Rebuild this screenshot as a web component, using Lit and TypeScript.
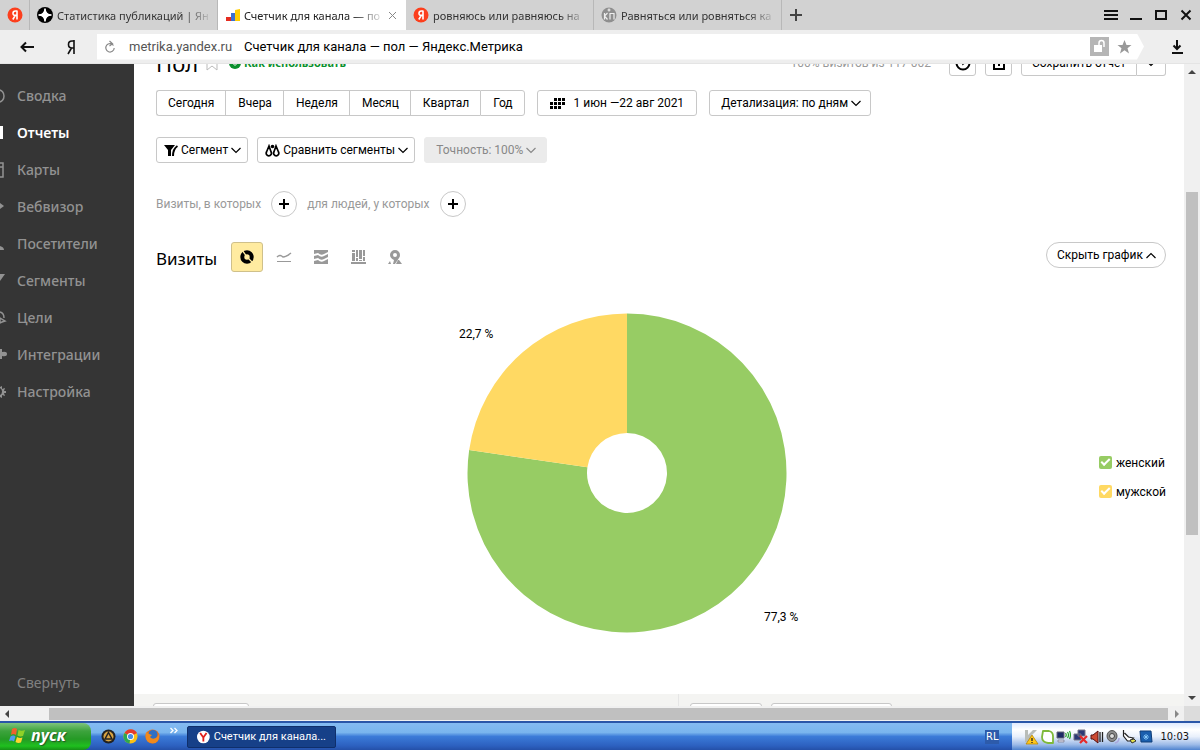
import { LitElement, html, svg, css, nothing } from "lit";
import { customElement, state } from "lit/decorators.js";

const yandexBadge = html`<svg width="16" height="16" viewBox="0 0 16 16" aria-hidden="true">
  <circle cx="8" cy="8" r="7.5" fill="#fc3f1d" />
  <path d="M10 3.5V12.5M10 4H8.4Q6 4 6 6.3T8.4 8.4H10M8.3 8.4L5.8 12.5" fill="none" stroke="#fff" stroke-width="1.6" />
</svg>`;

const zenIcon = html`<svg width="16" height="16" viewBox="0 0 16 16" aria-hidden="true">
  <circle cx="8" cy="8" r="8" fill="#000" />
  <path d="M8 1.500Q8 8 14.500 8Q8 8 8 14.500Q8 8 1.500 8Q8 8 8 1.500Z" fill="#fff" stroke="#fff" stroke-width="1.500" />
  <path d="M8 4l1.500 2.500L12 8 9.500 9.500 8 12 6.500 9.500 4 8l2.500-1.500z" fill="#fff" />
</svg>`;

const metrikaIcon = html`<svg width="16" height="16" viewBox="0 0 16 16" aria-hidden="true">
  <path d="M1 10h5v4H1z" fill="#e52c20" />
  <path d="M6 6h4v8H6z" fill="#3a6fd0" />
  <path d="M10 3l5-1v12h-5z" fill="#ffcd00" />
</svg>`;

const kpIcon = html`<svg width="16" height="16" viewBox="0 0 16 16" aria-hidden="true">
  <circle cx="8" cy="8" r="7.5" fill="#8f8f8f" />
  <path d="M3.5 6v6.500M6.500 6l-3 3 3 3.500M9 12.500v-6h4v6M8 1.500v3M6.500 3h3" fill="none" stroke="#eee" stroke-width="1.200" />
</svg>`;

const chevron = (up = false) => html`<svg width="10" height="7" viewBox="0 0 10 7" aria-hidden="true">
  <path d=${up ? "M.5 6L5 1.500L9.500 6" : "M.5 1L5 5.500L9.500 1"} fill="none" stroke="currentColor" stroke-width="1.200" />
</svg>`;

const plus = html`<svg width="12" height="12" viewBox="0 0 12 12" aria-hidden="true">
  <path d="M6 1v10M1 6h10" stroke="#000" stroke-width="2" />
</svg>`;

interface Tab {
  title: string;
  icon: unknown;
  active?: boolean;
}

const TABS: Tab[] = [
  { title: "Статистика публикаций | Ян", icon: zenIcon },
  { title: "Счетчик для канала — по", icon: metrikaIcon, active: true },
  { title: "ровняюсь или равняюсь на", icon: yandexBadge },
  { title: "Равняться или ровняться ка", icon: kpIcon },
];

const MENU = [
  { name: "Сводка", icon: svg`<ellipse cx="-1" cy="8" rx="5" ry="6" fill="none" stroke="currentColor" stroke-width="1.500"/>` },
  { name: "Отчеты", icon: svg`<path d="M0 1h3v13H0z" fill="currentColor"/>` },
  { name: "Карты", icon: svg`<path d="M0 1h3v14H0M0 5h3" fill="none" stroke="currentColor" stroke-width="1.500"/>` },
  { name: "Вебвизор", icon: svg`<path d="M0 4l4 3-4 3z" fill="currentColor"/>` },
  { name: "Посетители", icon: svg`<path d="M0 10q4 1 4 4H0z" fill="currentColor"/>` },
  { name: "Сегменты", icon: svg`<path d="M0 1h5L0 8z" fill="currentColor"/>` },
  { name: "Цели", icon: svg`<path d="M0 2q4 1 4 6M0 13V8l5 3-3 1z" fill="none" stroke="currentColor" stroke-width="1.500"/>` },
  { name: "Интеграции", icon: svg`<path d="M0 2h2v3q5-1 5 2t-5 2v3H0z" fill="currentColor"/>` },
  { name: "Настройка", icon: svg`<path d="M0 3l2-1v3l3-1-1 3h2v2H4l1 3-3-1v3l-2-1v-2a4 4 0 0 0 0-7z" fill="currentColor"/>` },
];

const PERIODS = ["Сегодня", "Вчера", "Неделя", "Месяц", "Квартал", "Год"];

const VIEWS = [
  { name: "Круговая диаграмма", icon: svg`<circle cx="8" cy="8" r="4.700" fill="none" stroke="#000" stroke-width="4"/><path d="M8 8L3 1M8 8L14 14" stroke="#ffeba0" stroke-width="1.300"/>` },
  { name: "Линии", icon: svg`<path d="M1 8q3-3 6 0Q10 8 15 4" fill="none" stroke="#999" stroke-width="1.500"/><path d="M1 12.500h14" stroke="#999" stroke-width="1"/>` },
  { name: "Области", icon: svg`<path d="M1 1h14v2L11 5Q8 7 5 4L1 5zM1 7l4-1q3 3 6 1l4-2v3l-4 2Q8 12 5 9L1 10zM1 12l4-1q3 3 6 1l4-2v5H1z" fill="#999"/>` },
  { name: "Колонки", icon: svg`<path d="M2 1h3v2H2zM2 4h3v8H2zM6 1h2v7H6zM6 9h2v3H6zM9 1h3v9H9zM9 11h3v1H9zM13 1h2v6h-2zM13 8h2v4h-2zM1 13h15v2H1z" fill="#999"/>` },
  { name: "Карта", icon: svg`<path d="M8 1a5 5 0 0 0-5 5q0 3 4 5l-1 4h2l4-6q1-1 1-3a5 5 0 0 0-5-5zm0 3a2 2 0 1 1 0 4 2 2 0 0 1 0-4zM3 12L1 15h3zM11 11l-2 4h6l-3-4z" fill="#999" fill-rule="evenodd"/>` },
];

const SHARES = [
  { name: "женский", value: 77.3, color: "#97cc64", tx: 297, ty: 308 },
  { name: "мужской", value: 22.7, color: "#ffd963", tx: -8, ty: 25 },
];

@customElement("browser-chrome")
class BrowserChrome extends LitElement {
  static styles = css`
    :host { display: block; font-family: "Noto Sans", "Open Sans", sans-serif; }
    button { border: 0; background: none; padding: 0; color: inherit; font: inherit; display: grid; place-items: center; }
    .tabs { display: flex; height: 30px; background: #d2d2d2; align-items: stretch; }
    .pinned { width: 30px; border-right: 1px solid #b8b8b8; box-sizing: border-box; flex: none; }
    .tab { flex: 0 1 188px; min-width: 0; box-sizing: border-box; display: flex; align-items: center; gap: 4px; padding: 0 4px 0 7px; border-right: 1px solid #b8b8b8; font-size: 11px; color: #333; text-align: left; }
    .tab svg { flex: none; }
    .tab .name { flex: 1; min-width: 0; overflow: hidden; white-space: nowrap; mask-image: linear-gradient(to right, #000 calc(100% - 30px), transparent); }
    .active { background: #fff; border-color: #fff; color: #222; gap: 3px; padding-right: 8px; }
    .plus { width: 28px; }
    .window { margin-left: auto; display: flex; align-items: center; gap: 8px; padding-right: 6px; }
    .window button { width: 17px; height: 20px; }
    .bar { display: flex; height: 34px; background: #eee; align-items: center; box-sizing: border-box; padding: 4px 14px 4px 18px; border-bottom: 1px solid #e4e4e4; }
    .nav { width: 17px; height: 26px; }
    .ya { margin-left: 27px; margin-right: 18px; }
    .address { flex: 1; margin-right: 24px; min-width: 0; height: 26px; display: flex; align-items: center; background: #fff; padding: 0 10px 0 6px; clip-path: polygon(0 0, calc(100% - 7px) 0, 100% 50%, calc(100% - 7px) 100%, 0 100%); font: 13px/18px Roboto, "Noto Sans", sans-serif; }
    .address input { margin-left: 12px; border: 0; padding: 0; width: 115px; background: none; font: inherit; color: #555; outline: 0; }
    .address label { flex: 1; min-width: 0; white-space: nowrap; overflow: hidden; color: #000; }
    .address .end { margin-left: 6px; }
  `;

  render() {
    return html`
      <nav class="tabs" aria-label="Вкладки">
        <button class="pinned" aria-label="Яндекс">${yandexBadge}</button>
        ${TABS.map(
          (t) => html`<button class="tab ${t.active ? "active" : ""}">
            ${t.icon}<span class="name">${t.title}</span>
            ${t.active
              ? html`<svg width="9" height="9" viewBox="0 0 9 9"><path d="M1 1l7 7M8 1L1 8" stroke="#888" /></svg>`
              : nothing}
          </button>`
        )}
        <button class="plus" aria-label="Новая вкладка">
          <svg width="12" height="12"><path d="M6 0v12M0 6h12" stroke="#444" stroke-width="2" /></svg>
        </button>
        <div class="window">
          <button aria-label="Меню"><svg width="14" height="12"><path d="M0 2h14M0 6h14M0 10h14" stroke="#111" stroke-width="2" /></svg></button>
          <button aria-label="Свернуть"><svg width="12" height="12"><path d="M0 10h12" stroke="#111" stroke-width="2" /></svg></button>
          <button aria-label="Развернуть"><svg width="12" height="12"><path d="M1 2h10v8H1z" fill="none" stroke="#111" stroke-width="2" /></svg></button>
          <button aria-label="Закрыть"><svg width="12" height="12"><path d="M1.500 1.500l9 9M10.500 1.500l-9 9" stroke="#111" stroke-width="2" /></svg></button>
        </div>
      </nav>
      <div class="bar">
        <button class="nav" aria-label="Назад">
          <svg width="14" height="12"><path d="M14 6H2M6 1.500L1.500 6L6 10.500" fill="none" stroke="#111" stroke-width="2" /></svg>
        </button>
        <button class="nav ya" aria-label="Яндекс">
          <svg width="10" height="16" viewBox="0 0 10 16"><path d="M8 1v14M8 2H6Q2.500 2 2.500 5.500T6 9H8M5.500 9L2 15" fill="none" stroke="#111" stroke-width="1.600" /></svg>
        </button>
        <div class="address">
          <button aria-label="Обновить">
            <svg width="14" height="14" viewBox="0 0 14 14"><path d="M10.500 5.500A4.200 4.200 0 1 0 11.200 8M6.500 1L9.500 3.800L6.500 6" fill="none" stroke="#888" stroke-width="1.200" /></svg>
          </button>
          <input id="url" value="metrika.yandex.ru" />
          <label for="url">Счетчик для канала — пол — Яндекс.Метрика</label>
          <button class="end" aria-label="Защита">
            <svg width="19" height="19"><path d="M0 0h19v19H0z" fill="#b5b5b5" /><path d="M4 8h8v7H4z" fill="#fff" /><path d="M9 8V6a2.500 2.500 0 0 1 5 0v4" fill="none" stroke="#fff" stroke-width="1.500" /></svg>
          </button>
          <button class="end" aria-label="Закладка">
            <svg width="19" height="16" viewBox="0 0 19 16"><path d="M9.500 1l2 5h5l-4 3.200 1.500 5.300-4.500-3.300L5 14.500l1.500-5.300-4-3.200h5z" fill="#999" /></svg>
          </button>
        </div>
        <button class="end" aria-label="Загрузки">
          <svg width="18" height="14" viewBox="0 0 18 14"><path d="M9 0v9M5.500 5.500L9 9l3.500-3.500M4 13h11" fill="none" stroke="#111" stroke-width="2" /></svg>
        </button>
      </div>
    `;
  }
}

@customElement("side-menu")
class SideMenu extends LitElement {
  static styles = css`
    :host { display: flex; flex-direction: column; justify-content: space-between; background: #353535; font: 500 14px/37px "Noto Sans", "Open Sans", sans-serif; padding-top: 13px; box-sizing: border-box; overflow: hidden; }
    a { display: flex; align-items: center; gap: 9px; height: 37px; color: #929292; text-decoration: none; }
    a.on { color: #fff; font-weight: 600; }
    .fold { border: 0; background: none; text-align: left; padding: 0 0 0 17px; margin-bottom: 5px; color: #808080; font: 14px/36px "Noto Sans", "Open Sans", sans-serif; }
  `;

  render() {
    return html`
      <nav>
        ${MENU.map(
          (m) => html`<a href="#" class=${m.name === "Отчеты" ? "on" : ""}>
            <svg width="8" height="20" viewBox="0 0 8 16" aria-hidden="true">${m.icon}</svg>${m.name}
          </a>`
        )}
      </nav>
      <button class="fold">Свернуть</button>
    `;
  }
}

@customElement("report-page")
class ReportPage extends LitElement {
  @state() private period = "";
  @state() private view = 0;

  static styles = css`
    :host { display: flex; flex-direction: column; background: #fff; overflow: hidden; min-width: 0; font: 12px/16px Roboto, "Liberation Sans", sans-serif; color: #000; }
    button { height: 26px; box-sizing: border-box; border: 1px solid #c8c8c8; border-radius: 3px; background: #fff; color: #000; padding: 0 11px; font: inherit; display: inline-flex; align-items: center; justify-content: center; gap: 4px; white-space: nowrap; }
    .body { padding: 0 18px 0 22px; display: flex; flex-direction: column; flex: 1; }
    .row { display: flex; align-items: center; }
    .head { margin-top: -14px; height: 26px; }
    h1 { margin: 0; font: 22px/26px "Noto Sans", sans-serif; }
    .star { margin: 0 11px 0 8px; }
    .how { display: flex; align-items: center; gap: 3px; color: #0a8f2c; font: 700 11px/16px "Noto Sans", sans-serif; text-decoration: none; }
    .count { margin-left: auto; margin-right: 18px; color: #999; }
    .square { width: 27px; padding: 0; margin-right: 9px; }
    .left { border-radius: 3px 0 0 3px; padding: 0 10px; }
    .right { border-radius: 0 3px 3px 0; border-left: 0; padding: 0 9px; }
    .periods { margin-top: 14px; gap: 12px; }
    .group { display: flex; }
    .group button { border-right-width: 0; border-radius: 0; padding-left: 12px; }
    .group button:first-child { border-radius: 3px 0 0 3px; padding-left: 11px; }
    .group button:last-child { border-radius: 0 3px 3px 0; border-right-width: 1px; }
    .group .chosen { background: #ffeba0; }
    .date { gap: 9px; padding: 0 12px; }
    .detail { padding: 0 9px 0 11px; gap: 3px; }
    .segments { margin-top: 21px; gap: 9px; }
    .segments button { padding: 0 6px 0 7px; gap: 3px; }
    .segments .off { background: #ebebeb; border-color: #ebebeb; color: #888; padding: 0 10px 0 11px; }
    .filters { margin-top: 28px; gap: 10px; color: #999; }
    .round { width: 26px; padding: 0; border-radius: 13px; }
    .chart-head { margin-top: 25px; height: 30px; }
    h2 { margin: 0 14px 0 0; padding-top: 4px; font: 17px/30px "Noto Sans", "Open Sans", sans-serif; }
    .views { display: flex; gap: 5px; }
    .views button { width: 32px; height: 30px; padding: 0; border-color: transparent; background: none; }
    .views .current { background: #ffeba0; border-color: #cfc08a; }
    .hide { margin-left: auto; align-self: flex-start; border-radius: 13px; padding: 0 9px 0 10px; gap: 3px; }
    .chart { display: grid; grid-template-columns: 1fr auto; align-items: center; margin-top: 41px; }
    .pie { justify-self: center; overflow: visible; display: block; }
    .pie text { font: 12px Roboto, sans-serif; }
    .legend { display: flex; flex-direction: column; gap: 13px; padding-top: 8px; }
    .legend label { display: flex; align-items: center; gap: 4px; }
    .legend input { appearance: none; margin: 0; width: 13px; height: 13px; border-radius: 2px; display: grid; place-items: center; }
    .legend input::before { content: ""; width: 7px; height: 3px; border: solid #fff; border-width: 0 0 2px 2px; transform: rotate(-45deg) translate(1px, -1px); }
    .next { height: 12px; flex: none; background: #f4f4f2; display: grid; grid-template-columns: 544px 1fr; }
    .next .cell { padding: 9px 19px 0; display: flex; gap: 9px; overflow: hidden; }
    .next .cell + .cell { border-left: 1px solid #e6e6e6; padding-left: 11px; }
    .next .w1 { width: 96px; }
    .next .w2 { width: 72px; }
    .next .w3 { width: 121px; }
  `;

  private slice(from: number, to: number, color: string) {
    const at = (v: number, r: number) => {
      const a = (v / 100) * Math.PI * 2;
      return `${160 + r * Math.sin(a)} ${160 - r * Math.cos(a)}`;
    };
    const big = to - from > 50 ? 1 : 0;
    return svg`<path fill=${color} d="M${at(from, 159.5)}A159.5 159.5 0 ${big} 1 ${at(to, 159.5)}L${at(to, 40)}A40 40 0 ${big} 0 ${at(from, 40)}Z"/>`;
  }

  render() {
    let sum = 0;
    return html`
      <div class="body">
        <div class="row head">
          <h1>Пол</h1>
          <svg class="star" width="12" height="16"><path d="M1 1h10v14l-5-4-5 4z" fill="none" stroke="#bbb" /></svg>
          <a class="how" href="#"><svg width="12" height="12"><circle cx="6" cy="6" r="6" fill="#0a8f2c" /><path d="M3.500 6l2.500 2.500L8.500 6" stroke="#fff" fill="none" /></svg>Как использовать</a>
          <span class="count">100% визитов из 117 002</span>
          <button class="square" aria-label="История"><svg width="16" height="16"><circle cx="8" cy="8" r="6.500" fill="none" stroke="#000" stroke-width="2" /><path d="M8 4v5l3-2" fill="none" stroke="#000" stroke-width="1.500" /></svg></button>
          <button class="square" aria-label="Экспорт"><svg width="14" height="16"><path d="M4 6H2v8h10V6h-2M7 11V2" fill="none" stroke="#000" stroke-width="2" /></svg></button>
          <button class="left">Сохранить отчет</button><button class="right" aria-label="Еще">${chevron()}</button>
        </div>

        <div class="row periods">
          <div class="group">
            ${PERIODS.map((p) => html`<button class=${p === this.period ? "chosen" : ""} @click=${() => (this.period = p)}>${p}</button>`)}
          </div>
          <button class="date">
            <svg width="15" height="11"><path d="M4 1.500h11M0 5.500h15M0 9.500h11" stroke="#000" stroke-width="3" stroke-dasharray="3 1" /></svg>1 июн —22 авг 2021
          </button>
          <button class="detail">Детализация: по дням ${chevron()}</button>
        </div>

        <div class="row segments">
          <button>
            <svg width="14" height="13"><path d="M0 1h11L7 6v6H4V6z" /><path d="M13.500 2Q9 5 9 12" fill="none" stroke="#000" stroke-width="2" /></svg>Сегмент ${chevron()}
          </button>
          <button>
            <svg width="15" height="13" viewBox="0 0 15 13"><path d="M4 2L1.500 8a2.600 2.600 0 1 0 4.600 0zM11 2L8.900 8a2.600 2.600 0 1 0 4.600 0z" fill="none" stroke="#000" stroke-width="1.700" /><circle cx="7.500" cy="2.500" r="1.800" /></svg>Сравнить сегменты ${chevron()}
          </button>
          <button class="off" disabled>Точность: 100% ${chevron()}</button>
        </div>

        <div class="row filters">
          <span>Визиты, в которых</span>
          <button class="round" aria-label="Добавить условие визитов">${plus}</button>
          <span>для людей, у которых</span>
          <button class="round" aria-label="Добавить условие людей">${plus}</button>
        </div>

        <div class="row chart-head">
          <h2>Визиты</h2>
          <div class="views">
            ${VIEWS.map(
              (v, i) => html`<button aria-label=${v.name} class=${i === this.view ? "current" : ""} @click=${() => (this.view = i)}>
                <svg width="16" height="16" viewBox="0 0 16 16">${v.icon}</svg>
              </button>`
            )}
          </div>
          <button class="hide">Скрыть график ${chevron(true)}</button>
        </div>

        <div class="chart">
          <svg class="pie" width="320" height="320" viewBox="0 0 320 320" role="img" aria-label="Визиты по полу">
            ${SHARES.map((s) => {
              const from = sum;
              sum += s.value;
              return this.slice(from, sum, s.color);
            })}
            ${SHARES.map((s) => svg`<text x=${s.tx} y=${s.ty}>${s.value.toFixed(1).replace(".", ",")} %</text>`)}
          </svg>
          <div class="legend">
            ${SHARES.map((s) => html`<label><input type="checkbox" checked style="background:${s.color}" />${s.name}</label>`)}
          </div>
        </div>
      </div>
      <div class="next">
        <div class="cell"><button class="w1" aria-label="Цель"></button></div>
        <div class="cell"><button class="w2" aria-label="Группировка"></button><button class="w3" aria-label="Метрики"></button></div>
      </div>
    `;
  }
}

@customElement("task-bar")
class TaskBar extends LitElement {
  static styles = css`
    :host { display: flex; height: 29px; align-items: stretch; box-sizing: border-box; border-top: 2px solid #2a56a8; background: linear-gradient(#84bbf2 0, #79b5ee 35%, #3b7bd8 50%, #2c60bf 85%, #2450a8 100%); font: 11px/14px "DejaVu Sans Condensed", "Noto Sans", sans-serif; }
    button { border: 0; padding: 0; background: none; font: inherit; color: inherit; display: flex; align-items: center; }
    .start { width: 91px; gap: 4px; padding: 0 0 3px 9px; border-radius: 0 8px 8px 0; background: linear-gradient(#7fc47c 0, #3da33d 30%, #259a25 60%, #1fc01f 85%, #168f16 100%); color: #fff; font: italic 700 16px/20px "Open Sans", sans-serif; text-shadow: 1px 1px 1px #245a24; }
    .quick { display: flex; align-items: center; gap: 7px; padding-left: 10px; }
    .more { color: #fff; align-self: flex-start; margin-left: 10px; }
    .task { margin: 3px 0 2px 9px; width: 149px; box-sizing: border-box; padding: 0 9px; gap: 4px; color: #fff; background: #164088; border: 1px solid #0f2f6b; border-radius: 2px; white-space: nowrap; font-family: Roboto, sans-serif; }
    .lang { margin-left: auto; align-self: center; background: #2d5bab; color: #fff; padding: 0 1px; margin-right: 13px; }
    .tray { display: flex; align-items: center; gap: 2px; padding: 0 11px 0 11px; background: linear-gradient(#dfeaff 0, #fff 25%, #e9f0fb 50%, #9dbbe8 80%, #4f83cf 100%); }
    .clock { margin-left: 5px; color: #111; }
  `;

  render() {
    return html`
      <button class="start">
        <svg width="18" height="18" viewBox="0 0 18 18"><path d="M3 3q3-2 5 0L7 9Q4 7 2 9z" fill="#f0612d" /><path d="M9.500 4q3 1.500 6.500 0l-2 6q-3 1-5.500-.5z" fill="#8fd128" /><path d="M1.500 10.500q3-2 5 0l-1.500 5Q3 14 0 15z" fill="#4f9bf0" /><path d="M8 11q3 1.500 5.500.5l-1.500 5q-3 1-5.500-.5z" fill="#ffd52e" /></svg>пуск
      </button>
      <div class="quick">
        <button aria-label="AIMP"><svg width="15" height="15" viewBox="0 0 15 15"><circle cx="7.500" cy="7.500" r="7" fill="#222" /><circle cx="7.500" cy="7.500" r="5" fill="#d9a441" /><path d="M7.500 3.500l3.500 6.500H4z" fill="none" stroke="#222" stroke-width="1.500" /></svg></button>
        <button aria-label="Chrome"><svg width="15" height="15" viewBox="0 0 15 15"><circle cx="7.500" cy="7.500" r="7" fill="#fbc116" /><path d="M7.500 7.500L1.500 4a7 7 0 0 1 12.500 0z" fill="#e33b2e" /><path d="M7.500 7.500L1.500 4a7 7 0 0 0 5 10.500z" fill="#2da94f" /><circle cx="7.500" cy="7.500" r="3.500" fill="#fff" /><circle cx="7.500" cy="7.500" r="2.600" fill="#4a90e8" /></svg></button>
        <button aria-label="Firefox"><svg width="15" height="15" viewBox="0 0 15 15"><circle cx="7.500" cy="7.500" r="7" fill="#e8701a" /><circle cx="8" cy="5.500" r="4.500" fill="#2f6fc4" /><path d="M1 3q2 1 3 2l3 1-2 2q2 3 6 1 3-2 2-5 2 4 0 7.500T6 14 .5 7z" fill="#f08a1d" /></svg></button>
      </div>
      <button class="more" aria-label="Ещё"><svg width="8" height="16" viewBox="0 0 8 16"><path d="M.5 5L3 7.500.5 10M4.500 5L7 7.500 4.500 10" fill="none" stroke="#fff" stroke-width="1.300" /></svg></button>
      <button class="task">
        <svg width="14" height="14" viewBox="0 0 14 14"><circle cx="7" cy="7" r="7" fill="#fff" /><path d="M3.500 2.500L7 7.500l3.500-5M7 7v5" fill="none" stroke="#e0201b" stroke-width="2" /></svg>Счетчик для канала...
      </button>
      <span class="lang">RL</span>
      <div class="tray">
        <svg width="16" height="16" viewBox="0 0 16 16"><path d="M2 1h3v5l5-5h4L8 7l3 6H2z" fill="#b9bdb9" /><path d="M9 6l6 9H3z" fill="#ffc61a" stroke="#b98500" stroke-width=".8" /><path d="M9 9v3M9 13v1" stroke="#222" stroke-width="1.300" /></svg>
        <svg width="13" height="14" viewBox="0 0 13 14"><path d="M2 1h6q4 1 4 5v7H7Q1 12 1 7z" fill="#fff" stroke="#7fb93a" stroke-width="1.800" stroke-linejoin="round" /></svg>
        <svg width="15" height="14" viewBox="0 0 15 14"><path d="M1 2h7v6H1z" fill="#1d2a66" stroke="#667" /><path d="M2 10h6v2H2z" fill="#dde" stroke="#778" stroke-width=".7" /><path d="M9.500 3q1.500 2 0 4M11.500 2q2 3 0 6M13.500 1q2 4 0 8" fill="none" stroke="#27a527" stroke-width="1.200" /></svg>
        <svg width="15" height="15" viewBox="0 0 15 15"><path d="M5 1h7v6H5zM1 5h7v6H1z" fill="#2c3976" stroke="#778" /><path d="M7 7l7 7M14 7l-7 7" stroke="#e62a2a" stroke-width="2.200" /></svg>
        <svg width="14" height="14" viewBox="0 0 14 14"><path d="M1 5h2l5-4v12L3 9H1z" fill="#cc4a33" stroke="#511" /><path d="M10 2v10M12.500 2v10" stroke="#222" stroke-width="1.300" /></svg>
        <svg width="14" height="14" viewBox="0 0 14 14"><ellipse cx="6" cy="6" rx="5" ry="5.500" fill="#8c8c8c" stroke="#555" /><circle cx="6" cy="6" r="2.500" fill="#ddd" stroke="#444" /><path d="M13 8q0 4-4 5" fill="none" stroke="#a9a9dd" stroke-width="1.500" /></svg>
        <svg width="15" height="15" viewBox="0 0 15 15"><path d="M1.500 1v6l4 5h3l3-3-5-1-4-4" fill="#fff" stroke="#222" stroke-width="1.200" /><path d="M8 11l4-1 2 2-4 2z" fill="#e6e34a" stroke="#333" /></svg>
        <svg width="14" height="14" viewBox="0 0 14 14"><path d="M1 1h11l1 11H2z" fill="#1a5fae" stroke="#0d3c78" /><path d="M7 4v6M4 7h6M5 5l4 4M9 5l-4 4" stroke="#8fd0ff" stroke-width=".8" /></svg>
        <time class="clock">10:03</time>
      </div>
    `;
  }
}

@customElement("app-root")
class AppRoot extends LitElement {
  static styles = css`
    :host { display: flex; flex-direction: column; height: 100vh; overflow: hidden; }
    .view { flex: 1; min-height: 0; display: grid; grid-template: minmax(0, 1fr) 15px / minmax(0, 1fr) 16px; background: #f0f0f0; }
    .page { display: grid; grid-template-columns: 134px minmax(0, 1fr); min-height: 0; }
    .vscroll { display: flex; flex-direction: column; align-items: center; justify-content: space-between; padding: 6px 0; }
    .hscroll { display: flex; align-items: center; justify-content: space-between; padding: 0 5px; }
    .vtrack { flex: 1; width: 12px; display: grid; grid-template-rows: 111fr 344fr 153fr; margin: 7px 0 8px; }
    .htrack { flex: 1; height: 12px; display: grid; grid-template-columns: 32fr 1119fr; margin: 0 7px 0 8px; }
    .thumb { grid-row: 2; background: #c0c0c0; }
    .htrack .thumb { grid-row: 1; grid-column: 2; }
    .corner { background: #dcdcdc; }
  `;

  render() {
    return html`
      <browser-chrome></browser-chrome>
      <div class="view">
        <div class="page"><side-menu></side-menu><report-page></report-page></div>
        <div class="vscroll" aria-hidden="true">
          <svg width="8" height="4"><path d="M0 4L4 0l4 4z" fill="#444" /></svg>
          <div class="vtrack"><div class="thumb"></div></div>
          <svg width="8" height="4"><path d="M0 0h8L4 4z" fill="#444" /></svg>
        </div>
        <div class="hscroll" aria-hidden="true">
          <svg width="4" height="8"><path d="M4 0v8L0 4z" fill="#444" /></svg>
          <div class="htrack"><div class="thumb"></div></div>
          <svg width="4" height="8"><path d="M0 0v8l4-4z" fill="#888" /></svg>
        </div>
        <div class="corner"></div>
      </div>
      <task-bar></task-bar>
    `;
  }
}
